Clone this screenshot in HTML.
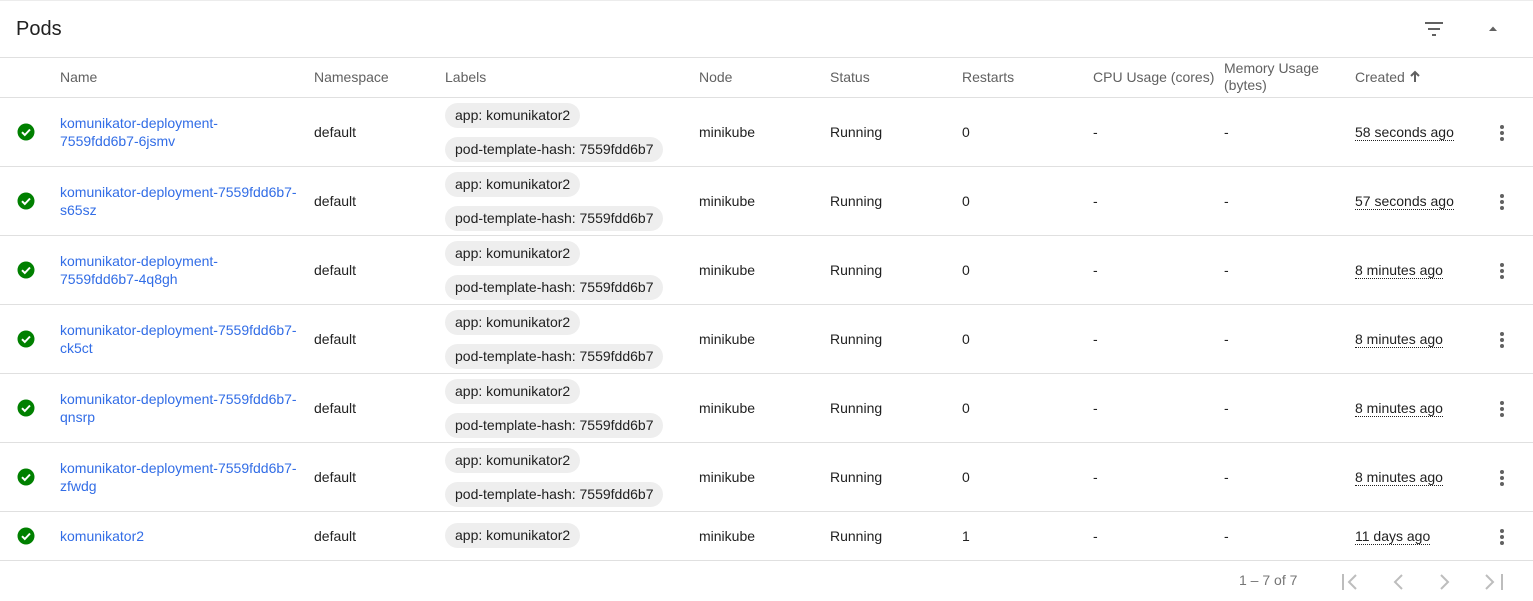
<!DOCTYPE html>
<html><head><meta charset="utf-8"><style>
body{margin:0;width:1533px;height:601px;background:#fff;font-family:"Liberation Sans",sans-serif;font-size:14px;color:#212121;position:relative;overflow:hidden}
.a{position:absolute;white-space:nowrap}
.line{position:absolute;left:0;width:1533px;height:1px;background:#e0e0e0}
.h{color:#616161;font-size:14px}
.lnk{color:#326de6;line-height:18px}
.chip{position:absolute;left:445px;height:25px;line-height:25px;padding:0 10px;background:#eeeeee;border-radius:13px;font-size:14px}
.dt{border-bottom:1px dotted #212121;line-height:15px}
.dots{position:absolute;left:1500px;width:4px}
.dots i{display:block;width:4px;height:4px;border-radius:2px;background:#616161;margin-bottom:2px}
</style></head><body>
<div class="line" style="top:0;background:#ececec"></div>
<div class="a" style="left:16px;top:18px;font-size:20px;color:#212121">Pods</div>
<svg class="a" style="left:1424px;top:20px" width="22" height="18"><rect x="1" y="2" width="18" height="2" fill="#616161"/><rect x="4" y="8" width="12" height="2" fill="#616161"/><rect x="8" y="14" width="4" height="2" fill="#616161"/></svg>
<svg class="a" style="left:1488px;top:25px" width="12" height="8"><path d="M1 6 L5 1.5 L9 6Z" fill="#616161"/></svg>
<div class="line" style="top:57px"></div>
<div class="a h" style="left:60px;top:69px">Name</div>
<div class="a h" style="left:314px;top:69px">Namespace</div>
<div class="a h" style="left:445px;top:69px">Labels</div>
<div class="a h" style="left:699px;top:69px">Node</div>
<div class="a h" style="left:830px;top:69px">Status</div>
<div class="a h" style="left:962px;top:69px">Restarts</div>
<div class="a h" style="left:1093px;top:69px">CPU Usage (cores)</div>
<div class="a h" style="left:1224px;top:60px;line-height:17px">Memory Usage<br>(bytes)</div>
<div class="a h" style="left:1355px;top:69px">Created</div>
<svg class="a" style="left:1409px;top:70px" width="12" height="14"><path d="M6 12 V2 M2 6 L6 2 L10 6" stroke="#616161" stroke-width="2" fill="none"/></svg>
<div class="line" style="top:97px"></div>

<svg class="a" style="left:17px;top:123px" width="18" height="18"><circle cx="9" cy="9" r="8.5" fill="#008000"/><path d="M5 9.2 L7.8 12 L13 6.5" stroke="#fff" stroke-width="2" fill="none"/></svg>
<div class="a lnk" style="left:60px;top:114px">komunikator-deployment-<br>7559fdd6b7-6jsmv</div>
<div class="a" style="left:314px;top:124px">default</div>
<div class="chip" style="top:103px">app: komunikator2</div>
<div class="chip" style="top:137px">pod-template-hash: 7559fdd6b7</div>
<div class="a" style="left:699px;top:124px">minikube</div>
<div class="a" style="left:830px;top:124px">Running</div>
<div class="a" style="left:962px;top:124px">0</div>
<div class="a" style="left:1093px;top:124px">-</div>
<div class="a" style="left:1224px;top:124px">-</div>
<div class="a dt" style="left:1355px;top:125px">58 seconds ago</div>
<div class="dots" style="top:125px"><i></i><i></i><i></i></div>
<div class="line" style="top:166px"></div>

<svg class="a" style="left:17px;top:192px" width="18" height="18"><circle cx="9" cy="9" r="8.5" fill="#008000"/><path d="M5 9.2 L7.8 12 L13 6.5" stroke="#fff" stroke-width="2" fill="none"/></svg>
<div class="a lnk" style="left:60px;top:183px">komunikator-deployment-7559fdd6b7-<br>s65sz</div>
<div class="a" style="left:314px;top:193px">default</div>
<div class="chip" style="top:172px">app: komunikator2</div>
<div class="chip" style="top:206px">pod-template-hash: 7559fdd6b7</div>
<div class="a" style="left:699px;top:193px">minikube</div>
<div class="a" style="left:830px;top:193px">Running</div>
<div class="a" style="left:962px;top:193px">0</div>
<div class="a" style="left:1093px;top:193px">-</div>
<div class="a" style="left:1224px;top:193px">-</div>
<div class="a dt" style="left:1355px;top:194px">57 seconds ago</div>
<div class="dots" style="top:194px"><i></i><i></i><i></i></div>
<div class="line" style="top:235px"></div>

<svg class="a" style="left:17px;top:261px" width="18" height="18"><circle cx="9" cy="9" r="8.5" fill="#008000"/><path d="M5 9.2 L7.8 12 L13 6.5" stroke="#fff" stroke-width="2" fill="none"/></svg>
<div class="a lnk" style="left:60px;top:252px">komunikator-deployment-<br>7559fdd6b7-4q8gh</div>
<div class="a" style="left:314px;top:262px">default</div>
<div class="chip" style="top:241px">app: komunikator2</div>
<div class="chip" style="top:275px">pod-template-hash: 7559fdd6b7</div>
<div class="a" style="left:699px;top:262px">minikube</div>
<div class="a" style="left:830px;top:262px">Running</div>
<div class="a" style="left:962px;top:262px">0</div>
<div class="a" style="left:1093px;top:262px">-</div>
<div class="a" style="left:1224px;top:262px">-</div>
<div class="a dt" style="left:1355px;top:263px">8 minutes ago</div>
<div class="dots" style="top:263px"><i></i><i></i><i></i></div>
<div class="line" style="top:304px"></div>

<svg class="a" style="left:17px;top:330px" width="18" height="18"><circle cx="9" cy="9" r="8.5" fill="#008000"/><path d="M5 9.2 L7.8 12 L13 6.5" stroke="#fff" stroke-width="2" fill="none"/></svg>
<div class="a lnk" style="left:60px;top:321px">komunikator-deployment-7559fdd6b7-<br>ck5ct</div>
<div class="a" style="left:314px;top:331px">default</div>
<div class="chip" style="top:310px">app: komunikator2</div>
<div class="chip" style="top:344px">pod-template-hash: 7559fdd6b7</div>
<div class="a" style="left:699px;top:331px">minikube</div>
<div class="a" style="left:830px;top:331px">Running</div>
<div class="a" style="left:962px;top:331px">0</div>
<div class="a" style="left:1093px;top:331px">-</div>
<div class="a" style="left:1224px;top:331px">-</div>
<div class="a dt" style="left:1355px;top:332px">8 minutes ago</div>
<div class="dots" style="top:332px"><i></i><i></i><i></i></div>
<div class="line" style="top:373px"></div>

<svg class="a" style="left:17px;top:399px" width="18" height="18"><circle cx="9" cy="9" r="8.5" fill="#008000"/><path d="M5 9.2 L7.8 12 L13 6.5" stroke="#fff" stroke-width="2" fill="none"/></svg>
<div class="a lnk" style="left:60px;top:390px">komunikator-deployment-7559fdd6b7-<br>qnsrp</div>
<div class="a" style="left:314px;top:400px">default</div>
<div class="chip" style="top:379px">app: komunikator2</div>
<div class="chip" style="top:413px">pod-template-hash: 7559fdd6b7</div>
<div class="a" style="left:699px;top:400px">minikube</div>
<div class="a" style="left:830px;top:400px">Running</div>
<div class="a" style="left:962px;top:400px">0</div>
<div class="a" style="left:1093px;top:400px">-</div>
<div class="a" style="left:1224px;top:400px">-</div>
<div class="a dt" style="left:1355px;top:401px">8 minutes ago</div>
<div class="dots" style="top:401px"><i></i><i></i><i></i></div>
<div class="line" style="top:442px"></div>

<svg class="a" style="left:17px;top:468px" width="18" height="18"><circle cx="9" cy="9" r="8.5" fill="#008000"/><path d="M5 9.2 L7.8 12 L13 6.5" stroke="#fff" stroke-width="2" fill="none"/></svg>
<div class="a lnk" style="left:60px;top:459px">komunikator-deployment-7559fdd6b7-<br>zfwdg</div>
<div class="a" style="left:314px;top:469px">default</div>
<div class="chip" style="top:448px">app: komunikator2</div>
<div class="chip" style="top:482px">pod-template-hash: 7559fdd6b7</div>
<div class="a" style="left:699px;top:469px">minikube</div>
<div class="a" style="left:830px;top:469px">Running</div>
<div class="a" style="left:962px;top:469px">0</div>
<div class="a" style="left:1093px;top:469px">-</div>
<div class="a" style="left:1224px;top:469px">-</div>
<div class="a dt" style="left:1355px;top:470px">8 minutes ago</div>
<div class="dots" style="top:470px"><i></i><i></i><i></i></div>
<div class="line" style="top:511px"></div>

<svg class="a" style="left:17px;top:527px" width="18" height="18"><circle cx="9" cy="9" r="8.5" fill="#008000"/><path d="M5 9.2 L7.8 12 L13 6.5" stroke="#fff" stroke-width="2" fill="none"/></svg>
<div class="a lnk" style="left:60px;top:527px">komunikator2</div>
<div class="a" style="left:314px;top:528px">default</div>
<div class="chip" style="top:523px">app: komunikator2</div>
<div class="a" style="left:699px;top:528px">minikube</div>
<div class="a" style="left:830px;top:528px">Running</div>
<div class="a" style="left:962px;top:528px">1</div>
<div class="a" style="left:1093px;top:528px">-</div>
<div class="a" style="left:1224px;top:528px">-</div>
<div class="a dt" style="left:1355px;top:529px">11 days ago</div>
<div class="dots" style="top:529px"><i></i><i></i><i></i></div>
<div class="line" style="top:560px"></div>

<div class="a" style="left:1239px;top:572px;color:#757575;font-size:14px">1 – 7 of 7</div>
<svg class="a" style="left:1340px;top:572px" width="170" height="20" fill="none" stroke="#bdbdbd" stroke-width="2">
<path d="M3 2 V18"/><path d="M16 3 L9 10 L16 17"/>
<path d="M62 3 L55 10 L62 17"/>
<path d="M101 3 L108 10 L101 17"/>
<path d="M146 3 L153 10 L146 17"/><path d="M162 2 V18"/>
</svg>
</body></html>
